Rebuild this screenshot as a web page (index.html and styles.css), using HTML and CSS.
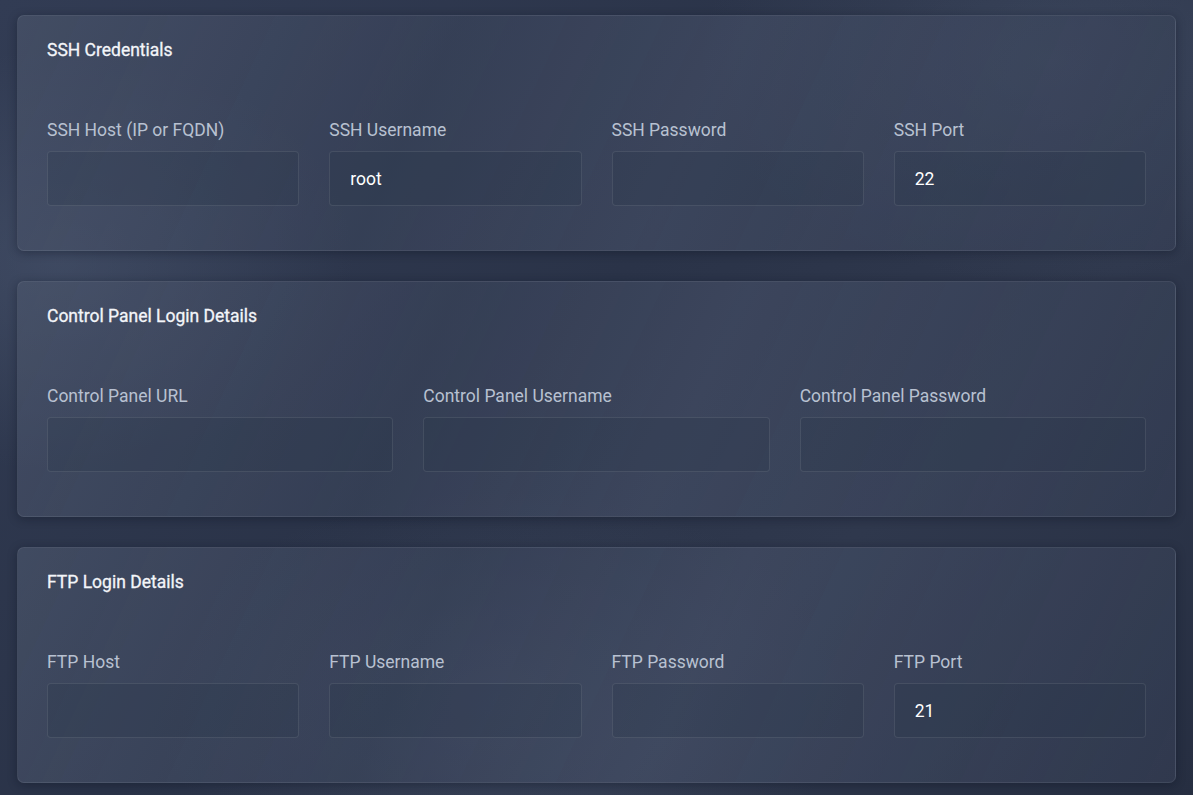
FILE: index.html
```html
<!DOCTYPE html>
<html lang="en">
<head>
<meta charset="utf-8">
<title>Credentials</title>
<link rel="stylesheet" href="styles.css">
</head>
<body>
<main class="page">
  <section class="card">
    <h2 class="card-title">SSH Credentials</h2>
    <div class="fields cols-4">
      <label class="field"><span class="label">SSH Host (IP or FQDN)</span><input class="input" type="text" value=""></label>
      <label class="field"><span class="label">SSH Username</span><input class="input" type="text" value="root"></label>
      <label class="field"><span class="label">SSH Password</span><input class="input" type="password" value=""></label>
      <label class="field"><span class="label">SSH Port</span><input class="input" type="text" value="22"></label>
    </div>
  </section>
  <section class="card">
    <h2 class="card-title">Control Panel Login Details</h2>
    <div class="fields cols-3">
      <label class="field"><span class="label">Control Panel URL</span><input class="input" type="text" value=""></label>
      <label class="field"><span class="label">Control Panel Username</span><input class="input" type="text" value=""></label>
      <label class="field"><span class="label">Control Panel Password</span><input class="input" type="password" value=""></label>
    </div>
  </section>
  <section class="card">
    <h2 class="card-title">FTP Login Details</h2>
    <div class="fields cols-4">
      <label class="field"><span class="label">FTP Host</span><input class="input" type="text" value=""></label>
      <label class="field"><span class="label">FTP Username</span><input class="input" type="text" value=""></label>
      <label class="field"><span class="label">FTP Password</span><input class="input" type="password" value=""></label>
      <label class="field"><span class="label">FTP Port</span><input class="input" type="text" value="21"></label>
    </div>
  </section>
</main>
</body>
</html>
```
FILE: styles.css
```css
html, body {
  margin: 0;
  padding: 0;
  height: 100%;
}
body {
  font-family: Roboto, "Liberation Sans", sans-serif;
  background:
    radial-gradient(ellipse 420px 300px at 60px 260px, rgba(90,104,130,0.35), transparent 70%),
    radial-gradient(ellipse 500px 320px at 1050px 60px, rgba(90,104,130,0.30), transparent 70%),
    radial-gradient(ellipse 500px 300px at 500px 700px, rgba(90,104,130,0.25), transparent 70%),
    linear-gradient(135deg, #323c54 0%, #2a3348 45%, #2f384d 70%, #262e41 100%);
  overflow: hidden;
}
.page {
  padding: 15px 17px;
  display: flex;
  flex-direction: column;
  gap: 30px;
}
.card {
  border: 1px solid rgba(255,255,255,0.07);
  border-radius: 7px;
  padding: 23px 29px 44px;
  background:
    linear-gradient(115deg, rgba(120,132,156,0.22) 0%, rgba(90,102,128,0.12) 35%, rgba(110,122,150,0.18) 58%, rgba(70,82,108,0.08) 100%),
    rgba(52,62,84,0.55);
  box-shadow: 0 2px 10px rgba(10,15,30,0.35);
}
.card-title {
  margin: 0 0 59px;
  font-size: 17.5px;
  line-height: 22px;
  font-weight: 400;
  -webkit-text-stroke: 0.3px #f3f5f9;
  color: #f3f5f9;
}
.fields {
  display: grid;
  column-gap: 30px;
}
.cols-4 { grid-template-columns: repeat(4, 1fr); }
.cols-3 { grid-template-columns: repeat(3, 1fr); }
.field {
  display: flex;
  flex-direction: column;
  gap: 11px;
}
.label {
  font-size: 17.5px;
  line-height: 20px;
  color: #b8c1d1;
}
.input {
  box-sizing: border-box;
  height: 55px;
  width: 100%;
  border: 1px solid rgba(255,255,255,0.09);
  border-radius: 4px;
  background: rgba(38,48,70,0.22);
  padding: 0 20px;
  font-family: Roboto, "Liberation Sans", sans-serif;
  font-size: 17.5px;
  color: #ffffff;
  outline: none;
}
```
